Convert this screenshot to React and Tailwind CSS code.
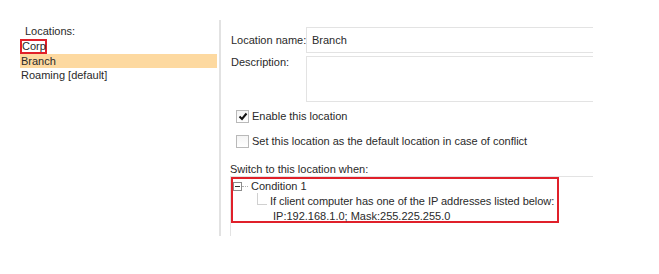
import React from "react";

function CheckBox({ checked }) {
  return (
    <div className="w-[13px] h-[13px] border border-[#b9b9b9] bg-gradient-to-b from-[#f4f4f4] to-white flex items-center justify-center shrink-0">
      {checked && (
        <svg width="10" height="9" viewBox="0 0 10 9">
          <path d="M1.5 4.5 L4 7 L8.5 1.5" fill="none" stroke="#111" strokeWidth="2" />
        </svg>
      )}
    </div>
  );
}

export default function App() {
  return (
    <div
      className="w-[659px] h-[274px] bg-white flex text-[11px] text-[#2a2a2a] overflow-hidden whitespace-nowrap"
      style={{ fontFamily: '"Liberation Sans", Arial, sans-serif' }}
    >
      {/* Left panel */}
      <div className="w-[219px] shrink-0 pt-[24px] pl-[20px] flex flex-col">
        <div className="h-[15px] leading-[14px] pl-[5px]">Locations:</div>
        <div className="h-[15px] flex items-start">
          <div className="h-[15px] w-[27px] border-2 border-[#e0202a] leading-[11px] overflow-visible">
            <span>Corp</span>
          </div>
        </div>
        <div className="h-[14px] leading-[14px] w-[197px] bg-[#fdd9a0] pl-[1px]">Branch</div>
        <div className="h-[14px] leading-[14px] pl-[1px]">Roaming [default]</div>
      </div>

      {/* Divider */}
      <div className="w-[2px] shrink-0 mt-[20px] h-[216px] bg-[#e2e2e2]" />

      {/* Right panel */}
      <div className="w-[372px] shrink-0 pt-[27px] flex flex-col">
        <div className="flex items-center pl-[10px]">
          <div className="w-[75px] shrink-0 leading-[13px]">Location name:</div>
          <div className="w-[287px] shrink-0 h-[26px] border border-r-0 border-[#e3e3e3] flex items-center pl-[5px]">
            Branch
          </div>
        </div>
        <div className="flex items-start pl-[10px] mt-[3px]">
          <div className="w-[75px] shrink-0 leading-[13px]">Description:</div>
          <div className="w-[287px] shrink-0 h-[46px] border border-r-0 border-[#e3e3e3]" />
        </div>

        <div className="flex items-center pl-[15px] mt-[8px] h-[13px]">
          <CheckBox checked />
          <span className="ml-[3px] leading-[13px]">Enable this location</span>
        </div>
        <div className="flex items-center pl-[15px] mt-[12px] h-[13px]">
          <CheckBox />
          <span className="ml-[3px] leading-[13px]">
            Set this location as the default location in case of conflict
          </span>
        </div>

        <div className="pl-[9px] mt-[15px] leading-[13px] h-[13px]">Switch to this location when:</div>

        <div className="ml-[9px] w-[363px] h-[60px] border-t border-l border-[#e3e3e3]">
          <div className="w-[328px] h-[46px] border-2 border-[#e0202a] flex flex-col">
            <div className="h-[15px] flex items-center">
              <div className="w-[9px] h-[9px] border border-[#8c8c8c] bg-white flex items-center justify-center shrink-0">
                <div className="w-[5px] h-[1px] bg-[#333]" />
              </div>
              <div className="w-[6px] h-0 border-t border-dotted border-[#b0b0b0] shrink-0" />
              <span className="ml-[3px] leading-[15px]">Condition 1</span>
            </div>
            <div className="h-[15px] flex items-start">
              <div className="ml-[24px] w-[10px] h-[12px] -mt-[1px] border-l border-b border-[#d0d0d0] shrink-0" />
              <span className="ml-[3px] leading-[15px] tracking-[-0.05px]">
                If client computer has one of the IP addresses listed below:
              </span>
            </div>
            <div className="h-[12px] flex items-start">
              <span className="ml-[40px] leading-[15px]">
                IP:192.168.1.0; Mask:255.225.255.0
              </span>
            </div>
          </div>
        </div>
      </div>
    </div>
  );
}
